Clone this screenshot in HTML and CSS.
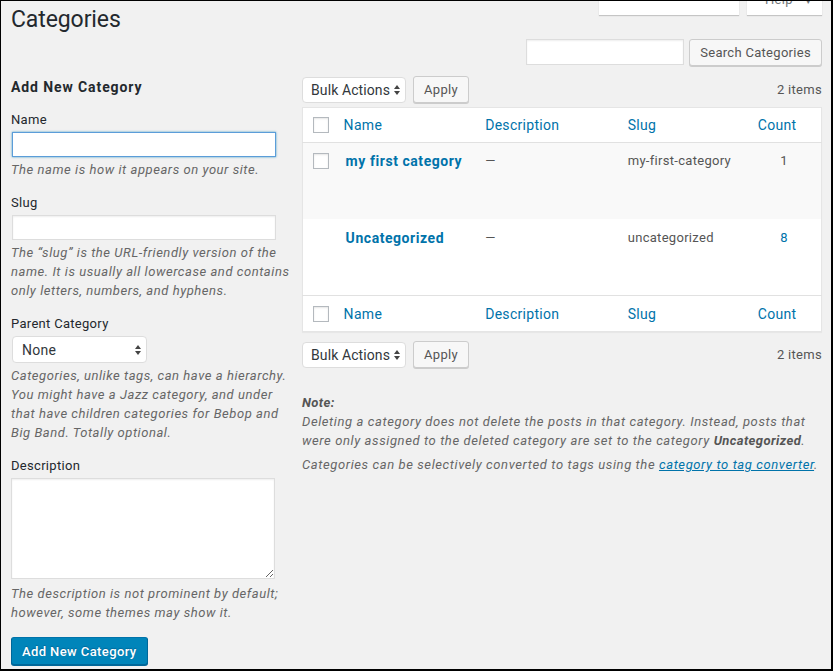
FILE: index.html
```html
<!DOCTYPE html>
<html lang="en">
<head>
    <meta charset="UTF-8">
    <meta name="viewport" content="width=device-width, initial-scale=1.0">
    <title>Categories</title>
    <link rel="stylesheet" href="styles.css">
</head>
<body>
<div class="screen">
    <div class="meta-tab options-tab"></div>
    <div class="meta-tab help-tab">Help <span class="tab-arrow">&#9660;</span></div>

    <h1>Categories</h1>

    <div class="search-box">
        <input type="search" class="search-input">
        <button class="button">Search Categories</button>
    </div>

    <div class="col-container">
        <div class="col-left">
            <h2>Add New Category</h2>

            <div class="form-field">
                <label>Name</label>
                <input type="text" class="text-input focused">
                <p>The name is how it appears on your site.</p>
            </div>

            <div class="form-field">
                <label>Slug</label>
                <input type="text" class="text-input">
                <p>The &ldquo;slug&rdquo; is the URL-friendly version of the name. It is usually all lowercase and contains only letters, numbers, and hyphens.</p>
            </div>

            <div class="form-field">
                <label>Parent Category</label>
                <div class="select parent-select">
                    <span>None</span>
                    <svg width="6" height="10" viewBox="0 0 6 10"><path d="M3 0L6 4H0Z M3 10L0 6H6Z" fill="#444"/></svg>
                </div>
                <p>Categories, unlike tags, can have a hierarchy. You might have a Jazz category, and under that have children categories for Bebop and Big Band. Totally optional.</p>
            </div>

            <div class="form-field desc-field">
                <label>Description</label>
                <textarea class="desc-input"></textarea>
                <p>The description is not prominent by default; however, some themes may show it.</p>
            </div>

            <button class="button-primary">Add New Category</button>
        </div>

        <div class="col-right">
            <div class="tablenav">
                <div class="select bulk-select">
                    <span>Bulk Actions</span>
                    <svg width="6" height="10" viewBox="0 0 6 10"><path d="M3 0L6 4H0Z M3 10L0 6H6Z" fill="#444"/></svg>
                </div>
                <button class="button apply">Apply</button>
                <span class="num-items">2 items</span>
            </div>

            <table class="widefat">
                <colgroup>
                    <col class="col-cb">
                    <col class="col-name">
                    <col class="col-desc">
                    <col class="col-slug">
                    <col class="col-count">
                </colgroup>
                <thead>
                    <tr>
                        <td class="check-column"><input type="checkbox" class="cb"></td>
                        <th><a href="#">Name</a></th>
                        <th><a href="#">Description</a></th>
                        <th><a href="#">Slug</a></th>
                        <th class="num"><a href="#">Count<span class="sorting-indicator"></span></a></th>
                    </tr>
                </thead>
                <tbody>
                    <tr class="alternate">
                        <td class="check-column"><input type="checkbox" class="cb"></td>
                        <td class="name"><a href="#" class="row-title">my first category</a></td>
                        <td>&mdash;</td>
                        <td>my-first-category</td>
                        <td class="num">1</td>
                    </tr>
                    <tr class="last">
                        <td class="check-column"></td>
                        <td class="name"><a href="#" class="row-title">Uncategorized</a></td>
                        <td>&mdash;</td>
                        <td>uncategorized</td>
                        <td class="num"><a href="#">8</a></td>
                    </tr>
                </tbody>
                <tfoot>
                    <tr>
                        <td class="check-column"><input type="checkbox" class="cb"></td>
                        <th><a href="#">Name</a></th>
                        <th><a href="#">Description</a></th>
                        <th><a href="#">Slug</a></th>
                        <th class="num"><a href="#">Count<span class="sorting-indicator"></span></a></th>
                    </tr>
                </tfoot>
            </table>

            <div class="tablenav bottom">
                <div class="select bulk-select">
                    <span>Bulk Actions</span>
                    <svg width="6" height="10" viewBox="0 0 6 10"><path d="M3 0L6 4H0Z M3 10L0 6H6Z" fill="#444"/></svg>
                </div>
                <button class="button apply">Apply</button>
                <span class="num-items">2 items</span>
            </div>

            <div class="form-wrap">
                <p><strong>Note:</strong><br>Deleting a category does not delete the posts in that category. Instead, posts that were only assigned to the deleted category are set to the category <strong>Uncategorized</strong>.</p>
                <p>Categories can be selectively converted to tags using the <a href="#">category to tag converter</a>.</p>
            </div>
        </div>
    </div>
</div>
</body>
</html>
```

FILE: styles.css
```css
body {
    margin: 0;
    font-family: Roboto, "Liberation Sans", sans-serif;
    font-size: 13px;
    letter-spacing: 0.3px;
    color: #23282d;
}
.screen {
    position: relative;
    width: 833px;
    height: 671px;
    box-sizing: border-box;
    overflow: hidden;
    background: #f1f1f1;
    border-style: solid;
    border-color: #000;
    border-width: 1px 2px 2px 1px;
    padding: 0 9px 0 10px;
}

/* screen options / help tabs, mostly scrolled off the top */
.meta-tab {
    position: absolute;
    top: -12px;
    height: 26px;
    background: #fff;
    box-shadow: 0 1px 1px rgba(0, 0, 0, 0.18);
    box-sizing: border-box;
    font-size: 13px;
    line-height: 22px;
    color: #72777c;
}
.options-tab {
    left: 598px;
    width: 140px;
}
.help-tab {
    left: 746px;
    width: 75px;
    padding-left: 18px;
}
.tab-arrow {
    font-size: 8px;
    margin-left: 8px;
}

h1 {
    font-size: 23px;
    font-weight: 400;
    line-height: 29px;
    letter-spacing: -0.1px;
    margin: 4px 0 0;
}

.search-box {
    display: flex;
    justify-content: flex-end;
    margin-top: 5px;
}
.search-input {
    width: 158px;
    height: 26px;
    box-sizing: border-box;
    border: 1px solid #ddd;
    box-shadow: inset 0 1px 2px rgba(0, 0, 0, 0.07);
    background: #fff;
    margin: 0 5px 0 0;
}

.button {
    height: 27px;
    box-sizing: border-box;
    padding: 0 10px;
    font-family: inherit;
    font-size: 13px;
    letter-spacing: inherit;
    color: #555;
    background: #f7f7f7;
    border: 1px solid #ccc;
    border-radius: 3px;
    box-shadow: 0 1px 0 #ccc;
}

.col-container {
    display: flex;
    gap: 7px;
    margin-top: 10px;
}
.col-left {
    width: 284px;
    flex-shrink: 0;
}
.col-right {
    flex: 1;
}

h2 {
    font-size: 14px;
    font-weight: 700;
    line-height: 18px;
    letter-spacing: 0.9px;
    margin: 2px 0 15px;
}

.form-field {
    margin-bottom: 15px;
}
.form-field label {
    display: block;
    line-height: 18px;
    margin-bottom: 3px;
}
.form-field p {
    margin: 3px 0 0;
    line-height: 19px;
    font-style: italic;
    letter-spacing: 0.55px;
    color: #666;
}
.text-input {
    display: block;
    width: 264px;
    height: 25px;
    box-sizing: border-box;
    margin: 0 0 0 1px;
    border: 1px solid #ddd;
    box-shadow: inset 0 1px 2px rgba(0, 0, 0, 0.07);
    background: #fff;
}
.text-input.focused {
    border-color: #5b9dd9;
    box-shadow: 0 0 2px rgba(30, 140, 190, 0.8);
}
.desc-input {
    display: block;
    width: 264px;
    height: 101px;
    box-sizing: border-box;
    margin: 0;
    border: 1px solid #ddd;
    box-shadow: inset 0 1px 2px rgba(0, 0, 0, 0.07);
    background: #fff;
}
.desc-field p {
    margin-top: 5px;
}

.select {
    display: flex;
    align-items: center;
    justify-content: space-between;
    box-sizing: border-box;
    background: #fff;
    border: 1px solid #ddd;
    border-radius: 4px;
    font-size: 14px;
    color: #32373c;
}
.parent-select {
    width: 135px;
    height: 27px;
    margin-left: 1px;
    padding: 0 5px 0 9px;
}
.bulk-select {
    width: 104px;
    height: 26px;
    padding: 0 5px 0 8px;
    letter-spacing: 0.1px;
}

.button-primary {
    height: 28px;
    box-sizing: border-box;
    padding: 0 10px;
    margin-top: 0;
    font-family: inherit;
    font-size: 13px;
    font-weight: 500;
    letter-spacing: 0.4px;
    color: #fff;
    background: #0085ba;
    border: 1px solid;
    border-color: #0073aa #006799 #006799;
    border-radius: 3px;
    box-shadow: 0 1px 0 #006799;
    text-shadow: 0 -1px 1px #006799;
}

.tablenav {
    display: flex;
    align-items: center;
    height: 27px;
    margin-bottom: 4px;
}
.tablenav .apply {
    margin-left: 7px;
}
.num-items {
    margin-left: auto;
    color: #555;
}
.tablenav.bottom {
    margin: 9px 0 0;
}

.widefat {
    width: 100%;
    table-layout: fixed;
    border-collapse: collapse;
    background: #fff;
    border: 1px solid #e5e5e5;
    box-shadow: 0 1px 1px rgba(0, 0, 0, 0.04);
}
.col-cb { width: 31px; }
.col-name { width: 141px; }
.col-desc { width: 142px; }
.col-slug { width: 129px; }
.col-count { width: 74px; }

.widefat th {
    text-align: left;
    font-size: 14px;
    font-weight: 400;
    line-height: 18px;
    padding: 8px 10px;
}
.widefat thead tr {
    border-bottom: 1px solid #e1e1e1;
}
.widefat tfoot tr {
    border-top: 1px solid #e1e1e1;
}
.widefat tfoot th {
    padding: 9px 10px 8px;
}
.widefat a {
    color: #0073aa;
    text-decoration: none;
}
.widefat td {
    vertical-align: top;
    line-height: 18px;
    color: #555;
    padding: 9px 10px 48px;
}
.widefat tr.last td {
    padding-top: 10px;
    padding-bottom: 47px;
}
.widefat thead td,
.widefat tfoot td {
    padding: 8px 0 8px 10px;
}
.widefat tfoot td {
    padding-top: 9px;
}
.widefat .num {
    text-align: center;
}
.sorting-indicator {
    display: inline-block;
    width: 14px;
}
.widefat td.name {
    padding-left: 12px;
}
.widefat tbody tr.alternate {
    background: #f9f9f9;
}
.row-title {
    font-size: 14px;
    font-weight: 700;
    letter-spacing: 0.55px;
}
.check-column {
    vertical-align: top;
}
.cb {
    appearance: none;
    display: block;
    width: 16px;
    height: 16px;
    margin: 1px 0 0;
    border: 1px solid #b4b9be;
    background: #fff;
    box-shadow: inset 0 1px 2px rgba(0, 0, 0, 0.1);
}

.form-wrap {
    margin-top: 25px;
    font-style: italic;
    letter-spacing: 0.6px;
    color: #666;
    line-height: 19px;
}
.form-wrap p {
    margin: 0 0 5px;
}
.form-wrap strong {
    font-weight: 700;
    letter-spacing: 0.4px;
    color: #555;
}
.form-wrap a {
    color: #0073aa;
    text-decoration: underline;
}
```
